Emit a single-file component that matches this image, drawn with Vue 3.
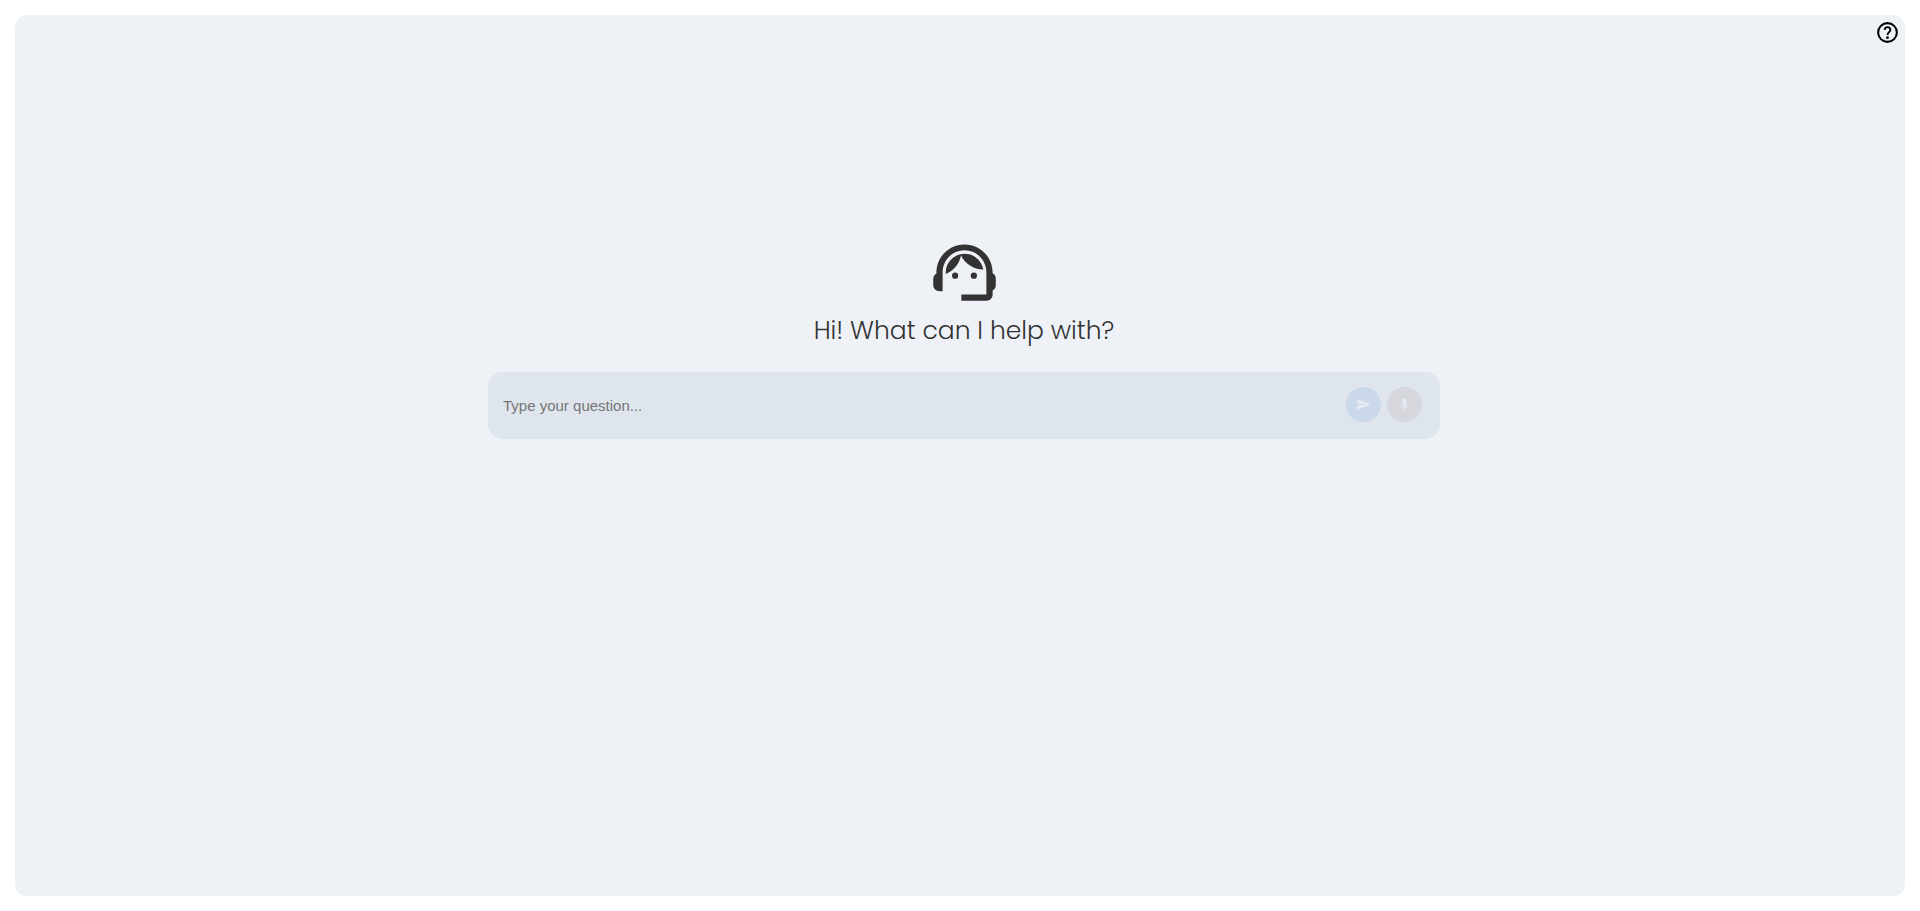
<script setup>
import { ref } from 'vue'

const question = ref('')
</script>

<template>
  <main class="page">
    <section class="panel">
      <button class="help" type="button" aria-label="Help">
        <svg viewBox="0 0 24 24" aria-hidden="true">
          <circle cx="12" cy="12" r="9" fill="none" stroke="currentColor" stroke-width="2" />
          <path d="M9.2 9.5C9.4 7.8 10.4 6.9 12 6.9c1.7 0 2.8 1 2.8 2.5 0 2.2-2.8 2.3-2.8 5" fill="none" stroke="currentColor" stroke-width="1.8" />
          <circle cx="12" cy="17" r="1.3" />
        </svg>
      </button>

      <div class="welcome">
        <svg class="agent" viewBox="0 0 24 24" aria-hidden="true">
          <path d="M21 12.22C21 6.73 16.74 3 12 3c-4.69 0-9 3.65-9 9.28-.6.34-1 .98-1 1.72v2c0 1.1.9 2 2 2h1v-6.1c0-3.87 3.13-7 7-7s7 3.13 7 7V19h-8v2h8c1.1 0 2-.9 2-2v-1.22c.59-.31 1-.92 1-1.64v-2.3c0-.7-.41-1.31-1-1.62z" />
          <circle cx="9" cy="13" r="1" />
          <circle cx="15" cy="13" r="1" />
          <path d="M18 11.03C17.52 8.18 15.04 6 12.05 6c-3.03 0-6.29 2.51-6.03 6.45 2.47-1.01 4.33-3.21 4.86-5.89 1.31 2.63 4 4.44 7.12 4.47z" />
        </svg>
        <h1>Hi! What can I help with?</h1>
        <form class="ask" @submit.prevent>
          <input v-model="question" type="text" placeholder="Type your question..." aria-label="Your question" />
          <button class="round send" type="submit" aria-label="Send" disabled>
            <svg viewBox="0 0 24 24" aria-hidden="true">
              <path d="M2 21 23 12 2 3v7l15 2-15 2z" />
            </svg>
          </button>
          <button class="round mic" type="button" aria-label="Speak" disabled>
            <svg viewBox="0 0 24 24" aria-hidden="true">
              <path d="M12 15c1.66 0 3-1.34 3-3V5c0-1.66-1.34-3-3-3S9 3.34 9 5v7c0 1.66 1.34 3 3 3z" />
              <path d="M17.3 11c0 3-2.54 5.6-5.3 5.6S6.7 14 6.7 11H5c0 3.41 2.72 6.23 6 6.72V20l1 2 1-2v-2.28c3.28-.48 6-3.3 6-6.72z" />
            </svg>
          </button>
        </form>
      </div>
    </section>
  </main>
</template>

<style>
body {
  margin: 0;
  background: #fff;
}
</style>

<style scoped>
.page {
  box-sizing: border-box;
  display: flex;
  min-height: 100vh;
  padding: 15px;
}

.panel {
  box-sizing: border-box;
  position: relative;
  flex: 1;
  padding: 220px 0 0 8px;
  border-radius: 12px;
  background: #eef2f7;
}

.help {
  position: absolute;
  top: 5px;
  right: 5px;
  display: flex;
  padding: 0;
  border: 0;
  background: none;
  color: #000;
  cursor: pointer;
}

.help svg {
  width: 25px;
  height: 25px;
  fill: currentColor;
}

.welcome {
  display: flex;
  flex-direction: column;
  align-items: center;
}

.agent {
  width: 75px;
  height: 75px;
  fill: #333;
}

h1 {
  margin: 0 0 20px;
  color: #333;
  font-family: Poppins, Inter, sans-serif;
  font-size: 25px;
  font-weight: 300;
  font-feature-settings: "cv11";
  line-height: 42px;
}

.ask {
  box-sizing: border-box;
  display: flex;
  align-items: center;
  gap: 6px;
  width: 90%;
  max-width: 952px;
  padding: 15px 18px 17px 15px;
  border-radius: 15px;
  background: #dee5ed;
}

input {
  flex: 1;
  min-width: 0;
  height: 35px;
  padding: 2px 0 0;
  box-sizing: border-box;
  border: 0;
  outline: 0;
  background: none;
  color: #333;
  font-family: Arial, "Liberation Sans", sans-serif;
  font-size: 15px;
}

input::placeholder {
  color: #757575;
}

.round {
  display: flex;
  align-items: center;
  justify-content: center;
  width: 35px;
  height: 35px;
  padding: 0;
  border: 0;
  border-radius: 50%;
}

.round svg {
  width: 15px;
  height: 15px;
  fill: #e6ecf3;
}

.send {
  background: #cbd7ea;
}

.mic {
  background: #d5d7dd;
}
</style>
